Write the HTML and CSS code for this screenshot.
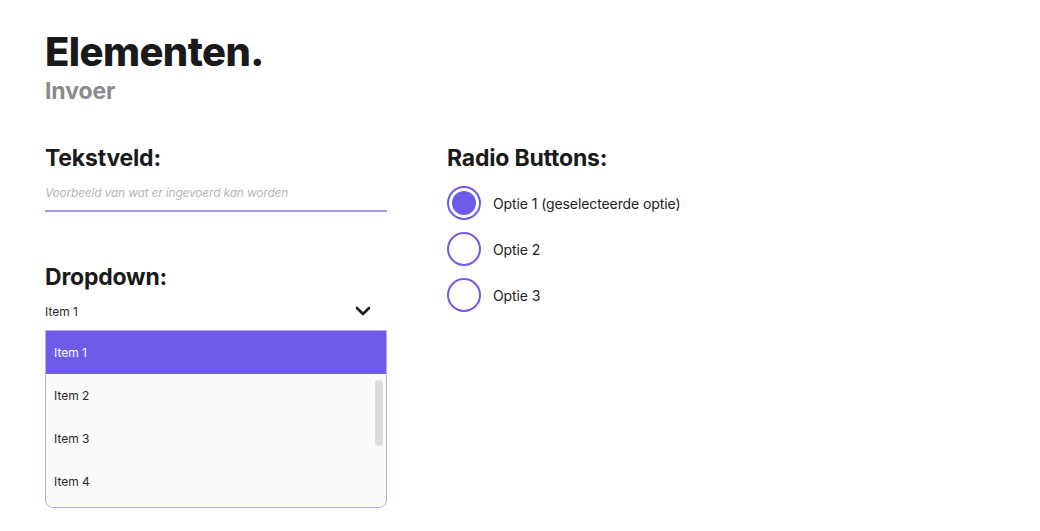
FILE: index.html
```html
<!DOCTYPE html>
<html lang="nl">
<head>
<meta charset="utf-8">
<title>Elementen</title>
<link rel="stylesheet" href="styles.css">
</head>
<body>
<div class="page">
  <header class="header">
    <h1 class="title">Elementen.</h1>
    <div class="subtitle">Invoer</div>
  </header>
  <div class="columns">
    <div class="col col-left">
      <section class="block">
        <h2 class="block-title">Tekstveld:</h2>
        <div class="textfield">
          <span class="placeholder">Voorbeeld van wat er ingevoerd kan worden</span>
        </div>
      </section>
      <section class="block block-dropdown">
        <h2 class="block-title">Dropdown:</h2>
        <div class="select">
          <span class="select-value">Item 1</span>
          <svg class="chevron" width="16" height="10" viewBox="0 0 16 10"><path d="M2 2 L8 8 L14 2" fill="none" stroke="#1c1c1c" stroke-width="2.6" stroke-linecap="round" stroke-linejoin="round"/></svg>
        </div>
        <div class="list">
          <div class="list-item active">Item 1</div>
          <div class="list-body">
            <div class="list-item">Item 2</div>
            <div class="list-item">Item 3</div>
            <div class="list-item">Item 4</div>
            <div class="scrollbar"></div>
          </div>
        </div>
      </section>
    </div>
    <div class="col col-right">
      <section class="block">
        <h2 class="block-title">Radio Buttons:</h2>
        <div class="radios">
          <label class="radio"><span class="circle checked"><span class="dot"></span></span><span class="radio-label">Optie 1 (geselecteerde optie)</span></label>
          <label class="radio"><span class="circle"></span><span class="radio-label">Optie 2</span></label>
          <label class="radio"><span class="circle"></span><span class="radio-label">Optie 3</span></label>
        </div>
      </section>
    </div>
  </div>
</div>
</body>
</html>
```
FILE: styles.css
```css
* { box-sizing: border-box; }
html, body { margin: 0; padding: 0; background: #ffffff; }
body {
  font-family: "Inter", "Noto Sans", sans-serif;
  color: #1c1c1c;
}
.page {
  padding: 29px 45px 0 45px;
}
.header { margin: 0; }
.title {
  margin: 0;
  font-size: 40px;
  font-weight: 800;
  letter-spacing: -0.6px;
  line-height: 46px;
  color: #1a1a1a;
}
.subtitle {
  font-size: 23px;
  font-weight: 700;
  color: #8a8a8a;
  line-height: 28px;
  margin-top: 2px;
  letter-spacing: -0.1px;
}
.columns {
  display: flex;
  gap: 60px;
  margin-top: 38px;
}
.col-left { width: 342px; }
.col-right { flex: 1; }
.block-title {
  margin: 0;
  font-size: 23px;
  font-weight: 700;
  line-height: 30px;
  letter-spacing: -0.2px;
  color: #1a1a1a;
}
.textfield {
  margin-top: 11px;
  height: 28px;
  border-bottom: 2px solid #a297f0;
  display: flex;
  align-items: flex-start;
  padding-top: 1px;
}
.placeholder {
  font-size: 12px;
  font-style: italic;
  color: #b5b5b5;
  letter-spacing: -0.2px;
}
.block-dropdown { margin-top: 50px; }
.select {
  margin-top: 6px;
  height: 32px;
  display: flex;
  align-items: center;
  justify-content: space-between;
  padding-right: 16px;
  padding-bottom: 6px;
}
.select-value {
  font-size: 12px;
  color: #2a2a2a;
}
.chevron { display: block; }
.list {
  margin-top: 0;
  border: 1px solid #b3abf3;
  border-radius: 0 0 8px 8px;
  background: #fafafa;
  overflow: hidden;
}
.list-item {
  height: 43px;
  display: flex;
  align-items: center;
  padding-left: 8px;
  font-size: 12px;
  color: #2a2a2a;
}
.list-item.active {
  background: #6c5ce7;
  color: #ffffff;
  margin: -1px -1px 0 -1px;
  padding-left: 9px;
  height: 44px;
}
.list-body {
  position: relative;
  padding-bottom: 4px;
}
.scrollbar {
  position: absolute;
  right: 3px;
  top: 6px;
  width: 8px;
  height: 66px;
  border-radius: 4px;
  background: #dcdcdc;
}
.radios {
  margin-top: 13px;
  display: flex;
  flex-direction: column;
  gap: 12px;
}
.radio {
  display: flex;
  align-items: center;
  gap: 12px;
}
.circle {
  width: 34px;
  height: 34px;
  border-radius: 50%;
  border: 2px solid #6c5ce7;
  display: flex;
  align-items: center;
  justify-content: center;
  flex: none;
}
.dot {
  width: 24px;
  height: 24px;
  border-radius: 50%;
  background: #6c5ce7;
}
.radio-label {
  font-size: 14px;
  color: #222222;
  letter-spacing: -0.1px;
}
```
